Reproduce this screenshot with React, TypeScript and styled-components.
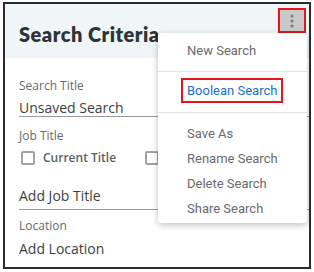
import styled, { createGlobalStyle } from 'styled-components';

const GlobalStyle = createGlobalStyle`
  body {
    margin: 0;
    background: #ffffff;
    font-family: 'Open Sans', sans-serif;
  }
`;

const Card = styled.div`
  position: relative;
  margin: 2px 0 0 3px;
  width: 308px;
  height: 267px;
  box-sizing: border-box;
  border: 2px solid #2b2b2b;
  background: #ffffff;
  overflow: hidden;
`;

const Header = styled.div`
  display: flex;
  justify-content: space-between;
  align-items: flex-start;
  height: 54px;
  background: #f0f6f7;
  padding: 0 3px 0 14px;
`;

const Title = styled.h1`
  margin: 18px 0 0;
  font-family: 'Lato', sans-serif;
  font-weight: 800;
  font-size: 20px;
  letter-spacing: 0.5px;
  color: #2d3438;
`;

const KebabButton = styled.button<{ $marked?: boolean }>`
  margin-top: 4px;
  width: 28px;
  height: 25px;
  box-sizing: border-box;
  border: ${(p) => (p.$marked ? '2px solid #e5161b' : 'none')};
  background: #c9c9c9;
  display: flex;
  align-items: center;
  justify-content: center;
  padding: 0;
`;

const Body = styled.div`
  display: flex;
  flex-direction: column;
  padding: 0 0 0 14px;
`;

const Label = styled.div<{ $top: number }>`
  margin-top: ${(p) => p.$top}px;
  font-size: 12px;
  line-height: 16px;
  color: #666a6d;
`;

const Value = styled.div<{ $underline?: boolean; $tight?: boolean; $top?: number }>`
  margin-top: ${(p) => p.$top ?? 0}px;
  font-size: 14px;
  line-height: ${(p) => (p.$tight ? '16px' : '20px')};
  color: #3a3f42;
  padding: ${(p) => (p.$tight ? '6px 0 0' : '4px 0 3px')};
  border-bottom: ${(p) => (p.$underline ? '1px solid #9a9a9a' : 'none')};
`;

const CheckRow = styled.div`
  display: flex;
  align-items: center;
  margin-top: 5px;
  padding-left: 2px;
`;

const CheckItem = styled.label`
  display: flex;
  align-items: center;
  gap: 8px;
  width: 124px;
  font-size: 12px;
  font-weight: 600;
  color: #5a5f62;
`;

const Box = styled.span`
  width: 14px;
  height: 14px;
  box-sizing: border-box;
  border: 2px solid #a2a2a2;
  border-radius: 2px;
`;

const Menu = styled.div`
  position: absolute;
  left: 153px;
  top: 29px;
  width: 149px;
  height: 190px;
  background: #ffffff;
  border-radius: 3px;
  box-shadow: 0 2px 6px rgba(0, 0, 0, 0.25);
  font-family: 'Roboto', sans-serif;
  font-size: 13px;
`;

const Section = styled.div<{ $divider?: boolean; $pad: string }>`
  padding: ${(p) => p.$pad};
  border-bottom: ${(p) => (p.$divider ? '1px solid #e4e4e4' : 'none')};
`;

const Item = styled.div`
  height: 25px;
  line-height: 21px;
  box-sizing: border-box;
  padding-left: 29px;
  color: #6a6a6a;
`;

const BooleanItem = styled.div`
  margin-left: 23px;
  width: 102px;
  height: 25px;
  box-sizing: border-box;
  border: 2px solid #e5161b;
  padding-left: 4px;
  line-height: 21px;
  color: #1a6fd1;
`;

function Dots() {
  return (
    <svg width='4' height='14' viewBox='0 0 4 14'>
      <circle cx='2' cy='2' r='1.6' fill='#7d7d7d' />
      <circle cx='2' cy='7' r='1.6' fill='#7d7d7d' />
      <circle cx='2' cy='12' r='1.6' fill='#7d7d7d' />
    </svg>
  );
}

export default function App() {
  return (
    <>
      <GlobalStyle />
      <Card>
        <Header>
          <Title>Search Criteria</Title>
          <KebabButton $marked>
            <Dots />
          </KebabButton>
        </Header>
        <Body>
          <Label $top={20}>Search Title</Label>
          <Value $underline $tight>Unsaved Search</Value>
          <Label $top={11}>Job Title</Label>
          <CheckRow>
            <CheckItem>
              <Box />
              Current Title
            </CheckItem>
            <CheckItem>
              <Box />
            </CheckItem>
          </CheckRow>
          <Value $underline $top={16}>
            Add Job Title
          </Value>
          <Label $top={8}>Location</Label>
          <Value $top={1}>Add Location</Value>
        </Body>
        <Menu>
          <Section $divider $pad='7px 0 6px'>
            <Item>New Search</Item>
          </Section>
          <Section $divider $pad='6px 0 9px'>
            <BooleanItem>Boolean Search</BooleanItem>
          </Section>
          <Section $pad='10px 0 0'>
            <Item>Save As</Item>
            <Item>Rename Search</Item>
            <Item>Delete Search</Item>
            <Item>Share Search</Item>
          </Section>
        </Menu>
      </Card>
    </>
  );
}
